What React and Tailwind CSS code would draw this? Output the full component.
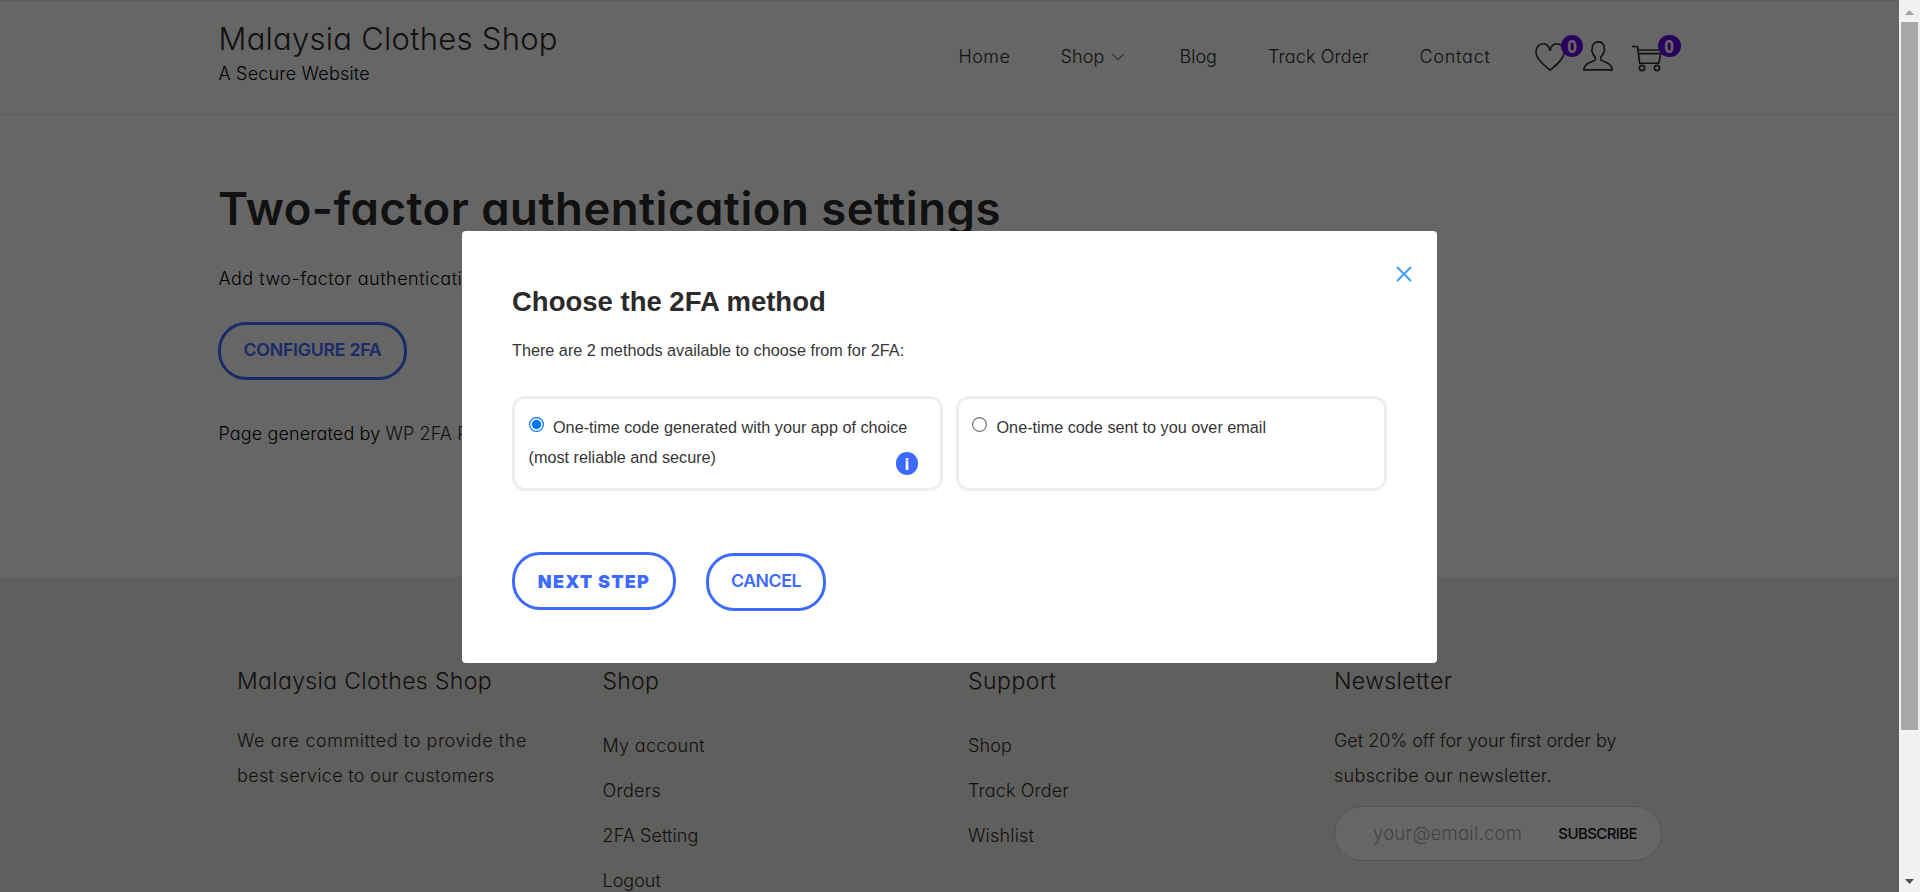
const linkClass = "h-[45px] text-[18px] leading-[45px]";

function HeartIcon() {
  return (
    <svg width="32" height="30" viewBox="0 0 32 30" fill="none" stroke="#2b2b2b" strokeWidth="1.6">
      <path d="M15 28.200C9 23.200 1 16.600 1 9.700C1 5.200 4.200 1.800 8.200 1.800C11.600 1.800 14.200 3.800 15 9C15.800 3.800 18.700 1.800 22 1.800C26 1.800 29.200 5.200 29.200 9.700C29.200 16.600 21 23.200 15 28.200Z" />
    </svg>
  );
}

function PersonIcon() {
  return (
    <svg width="30" height="30" viewBox="0 0 30 30" fill="none" stroke="#2b2b2b" strokeWidth="1.6">
      <path d="M12.300 16C10.500 14.700 9.500 12.900 9.200 10.600C8.400 10 8.600 8.300 9.300 7.900C8.900 3.900 11 0.900 15.400 0.900C19.900 0.900 21.500 3.900 21.100 7.900C21.800 8.400 21.700 10.100 20.900 10.600C20.600 12.900 19.400 14.700 17.800 16V19C18.500 20.600 29.200 20.300 29.200 28.900H0.800C0.800 20.300 11.600 20.600 12.300 19Z" />
    </svg>
  );
}

function CartIcon() {
  return (
    <svg width="32" height="27" viewBox="0 0 32 27" fill="none" stroke="#2b2b2b" strokeWidth="1.6">
      <path d="M0 1.500H5.500L7.700 18.200H26.800L29.500 5H6.200M6.500 8.600H29" />
      <circle cx="10" cy="23" r="2.600" />
      <circle cx="25" cy="23" r="2.600" />
    </svg>
  );
}

function Badge({ className }) {
  return (
    <span className={`absolute flex h-[22px] items-center justify-center rounded-full bg-[#6900e8] font-['Noto_Sans',sans-serif] text-[17px] leading-none font-bold text-white ${className}`}>
      0
    </span>
  );
}

function Header() {
  return (
    <header className="flex h-[115px] border-t border-b border-[#e6e6f0] pl-[218.5px] text-[#2b2b2b]">
      <div className="w-[740px] pt-5">
        <div className="h-9 text-[31px] leading-9 tracking-[0.27px]">Malaysia Clothes Shop</div>
        <div className="mt-[2.500px] h-7 text-[18px] leading-7 tracking-[0.2px] text-black">A Secure Website</div>
      </div>
      <nav className="flex h-28 items-center text-[18px] leading-7">
        <span className="w-[102px] tracking-[0.4px]">Home</span>
        <span className="flex w-[119px] items-center gap-[8px] tracking-[0.1px]">
          Shop
          <svg width="12" height="8" viewBox="0 0 12 8" fill="none" stroke="#2b2b2b" strokeWidth="1">
            <path d="M0.500 1L6 6.800L11.500 1" />
          </svg>
        </span>
        <span className="w-[88.500px]">Blog</span>
        <span className="w-[151.500px] tracking-[0.12px]">Track Order</span>
        <span className="w-[115px] tracking-[0.75px]">Contact</span>
      </nav>
      <div className="flex pt-[40px]">
        <div className="relative mt-[1px] h-[30px] w-[48px]">
          <HeartIcon />
          <Badge className="top-[-7px] left-[26.500px] w-[22px]" />
        </div>
        <div className="h-[30px] w-[49px]">
          <PersonIcon />
        </div>
        <div className="relative mt-[3.500px] h-[27px] w-[49px]">
          <CartIcon />
          <Badge className="top-[-9.500px] left-[26px] w-[23px]" />
        </div>
      </div>
    </header>
  );
}

function Main() {
  return (
    <main className="h-[462px] pt-[64px] pl-[218px] whitespace-nowrap">
      <h1 className="h-[60px] text-[45.500px] leading-[60px] font-semibold tracking-[0.48px] text-[#2b2b2b]">
        Two-factor authentication settings
      </h1>
      <p className="mt-[25px] h-[30px] pl-[0.500px] text-[18px] leading-[30px] tracking-[0.5px]">Add two-factor authentication</p>
      <button className="mt-7 flex h-[58px] w-[189px] items-center justify-center rounded-[28px] border-[3px] border-[#3e6bff] pb-[1px] text-[17.700px] font-semibold tracking-[-0.240px] text-[#3e6bff]">
        CONFIGURE 2FA
      </button>
      <p className="mt-[39px] h-[30px] pl-[0.500px] text-[18px] leading-[30px] tracking-[0.120px]">
        Page generated by <span className="text-[#2b2b2b]">WP 2FA Plugin</span>
      </p>
    </main>
  );
}

function Footer() {
  return (
    <footer className="flex h-[315px] overflow-hidden bg-[#eeede9] pt-[88px] pl-[237px] whitespace-nowrap text-[#2b2b2b]">
      <section className="w-[365.500px]">
        <h2 className="h-8 text-[23px] leading-8 tracking-[0.35px]">Malaysia Clothes Shop</h2>
        <p className="mt-[26px] text-[18px] leading-[35px] tracking-[0.56px]">We are committed to provide the</p>
        <p className="text-[18px] leading-[35px] tracking-[0.31px]">best service to our customers</p>
      </section>
      <section className="w-[365.500px]">
        <h2 className="h-8 text-[23px] leading-8 tracking-[0.250px]">Shop</h2>
        <ul className="mt-[26px]">
          <li className={`${linkClass} tracking-[0.3px]`}>My account</li>
          <li className={`${linkClass} tracking-[0.3px]`}>Orders</li>
          <li className={`${linkClass} tracking-[0.08px]`}>2FA Setting</li>
          <li className={`${linkClass} tracking-[0px]`}>Logout</li>
        </ul>
      </section>
      <section className="w-[366px]">
        <h2 className="h-8 text-[23px] leading-8 tracking-[0.5px]">Support</h2>
        <ul className="mt-[26px]">
          <li className={`${linkClass} tracking-[0.1px]`}>Shop</li>
          <li className={`${linkClass} tracking-[0.12px]`}>Track Order</li>
          <li className={`${linkClass} tracking-[0.2px]`}>Wishlist</li>
        </ul>
      </section>
      <section className="w-[328px]">
        <h2 className="h-8 text-[23px] leading-8 tracking-[0.4px]">Newsletter</h2>
        <p className="mt-[26px] text-[18px] leading-[35px] tracking-[-0.02px]">Get 20% off for your first order by</p>
        <p className="text-[18px] leading-[35px] tracking-[0.3px]">subscribe our newsletter.</p>
        <div className="mt-[13px] flex h-[55px] items-center justify-between rounded-full border border-[#cfcfcf] bg-white pr-[24px] pl-[38px]">
          <span className="text-[18.500px] tracking-[0.240px] text-[#a9a9a9]">your@email.com</span>
          <span className="mt-[2px] text-[15px] font-medium tracking-[-0.6px] text-[#111]">SUBSCRIBE</span>
        </div>
      </section>
    </footer>
  );
}

function Radio({ checked }) {
  return (
    <svg className="mt-[5px] mr-[9.500px] shrink-0" width="15" height="15" viewBox="0 0 15 15" fill="none">
      <circle cx="7.500" cy="7.500" r="6.900" stroke={checked ? "#0075ff" : "#767676"} strokeWidth="1.200" />
      {checked && <circle cx="7.500" cy="7.500" r="4.700" fill="#0075ff" />}
    </svg>
  );
}

function Modal() {
  return (
    <div className="relative h-[432px] w-[975px] rounded-[4px] bg-white pt-[51px] pl-[50px] font-['Liberation_Sans',Arial,sans-serif] font-normal whitespace-nowrap text-[#363636]">
      <svg className="absolute top-[34.500px] right-[25px]" width="16" height="16" viewBox="0 0 16 16" stroke="#4a9bff" strokeWidth="2" strokeLinecap="round">
        <path d="M1.500 1.500L14.500 14.500M14.500 1.500L1.500 14.500" />
      </svg>
      <h2 className="h-10 text-[27.500px] leading-10 font-bold text-[#2b2b2b]">Choose the 2FA method</h2>
      <p className="mt-[13px] h-[30px] text-[16.230px] leading-[30px]">There are 2 methods available to choose from for 2FA:</p>
      <div className="mt-[31px] flex gap-[13px] text-[16.230px] leading-[30px]">
        <label className="relative block h-[95px] w-[431px] rounded-[13px] border-[3px] border-[#eee] pt-[13px] pl-[13.500px]">
          <span className="flex">
            <Radio checked />
            One-time code generated with your app of choice
          </span>
          (most reliable and secure)
          <span className="absolute right-[22px] bottom-[13px] flex h-[23px] w-[22px] items-center justify-center rounded-full bg-[#3e6bff] font-['Noto_Sans',sans-serif] text-[16px] leading-none font-bold text-white">
            i
          </span>
        </label>
        <label className="block h-[95px] w-[431px] rounded-[13px] border-[3px] border-[#eee] pt-[13px] pl-[13px]">
          <span className="flex">
            <Radio />
            One-time code sent to you over email
          </span>
        </label>
      </div>
      <div className="mt-[61px] flex gap-[30px] font-['Inter',sans-serif] text-[#3e6bff]">
        <button className="h-[58px] w-[164px] rounded-[28px] border-[3px] border-[#3e6bff] text-[18px] font-black tracking-[1.200px]">NEXT STEP</button>
        <button className="mt-px h-[58px] w-[120px] rounded-[28px] border-[3px] border-[#3e6bff] pb-[1px] text-[17.700px] font-semibold tracking-[-0.450px]">CANCEL</button>
      </div>
    </div>
  );
}

function Scrollbar() {
  return (
    <div className="flex h-full w-[21px] flex-col items-center bg-[#f1f1f1]">
      <div className="flex h-[22px] items-center pt-[3px]">
        <svg width="9" height="5" viewBox="0 0 9 5" fill="#a3a3a3"><path d="M0 5L4.500 0L9 5Z" /></svg>
      </div>
      <div className="h-[708px] w-[17px] bg-[#a8a8a8]" />
      <div className="mt-auto pb-[8px]">
        <svg className="block" width="9" height="5" viewBox="0 0 9 5" fill="#505050"><path d="M0 0H9L4.500 5Z" /></svg>
      </div>
    </div>
  );
}

export default function App() {
  return (
    <div className="flex h-[892px] w-[1920px] overflow-hidden">
      <div className="relative h-full w-[1899px] overflow-hidden bg-white font-['Inter',sans-serif] font-[340] text-black [font-feature-settings:'cv11']">
        <Header />
        <Main />
        <Footer />
        <div className="absolute inset-0 bg-black/60 pt-[231px] pl-[462px]">
          <Modal />
        </div>
      </div>
      <Scrollbar />
    </div>
  );
}
